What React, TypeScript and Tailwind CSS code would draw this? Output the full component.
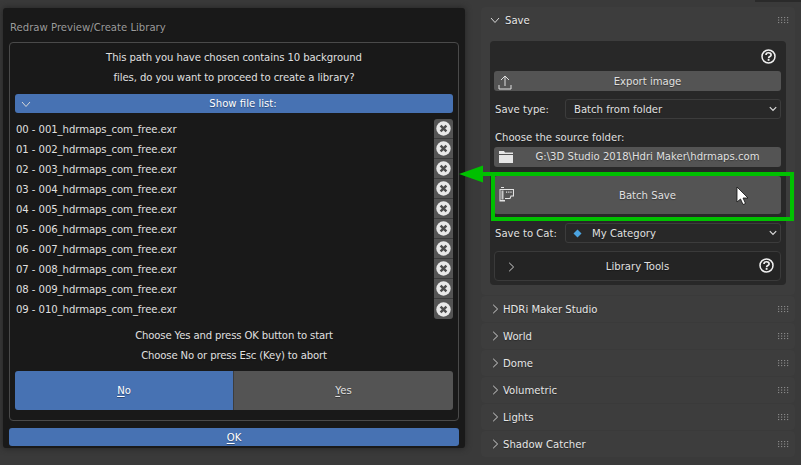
import React from "react";

const files = [
  "00 - 001_hdrmaps_com_free.exr",
  "01 - 002_hdrmaps_com_free.exr",
  "02 - 003_hdrmaps_com_free.exr",
  "03 - 004_hdrmaps_com_free.exr",
  "04 - 005_hdrmaps_com_free.exr",
  "05 - 006_hdrmaps_com_free.exr",
  "06 - 007_hdrmaps_com_free.exr",
  "07 - 008_hdrmaps_com_free.exr",
  "08 - 009_hdrmaps_com_free.exr",
  "09 - 010_hdrmaps_com_free.exr",
];
const panels = ["HDRi Maker Studio", "World", "Dome", "Volumetric", "Lights", "Shadow Catcher"];

function Chevron({ dir, className }: { dir: "down" | "right" | "small"; className?: string }) {
  if (dir === "down")
    return (
      <svg width="10" height="7" viewBox="0 0 10 7" className={className}>
        <path d="M1 1 L5 5.5 L9 1" fill="none" stroke="#d8d8d8" strokeWidth="1" />
      </svg>
    );
  if (dir === "small")
    return (
      <svg width="8" height="6" viewBox="0 0 8 6" className={className}>
        <path d="M0.8 1.2 L4 4.4 L7.2 1.2" fill="none" stroke="#dcdcdc" strokeWidth="1.2" />
      </svg>
    );
  return (
    <svg width="7" height="10" viewBox="0 0 7 10" className={className}>
      <path d="M1.2 0.8 L5.6 5 L1.2 9.2" fill="none" stroke="#cfcfcf" strokeWidth="1" />
    </svg>
  );
}

function Grip() {
  const dots = [];
  for (let x = 0; x < 4; x++)
    for (let y = 0; y < 3; y++)
      dots.push(<rect key={`${x}-${y}`} x={x * 3} y={y * 2.5} width="1.2" height="1.1" fill="#8a8a8a" />);
  return (
    <svg width="11" height="7" viewBox="0 0 11 7" className="shrink-0">
      {dots}
    </svg>
  );
}

function Help() {
  return (
    <svg width="15" height="15" viewBox="0 0 15 15">
      <circle cx="7.5" cy="7.5" r="6.5" fill="none" stroke="#f0f0f0" strokeWidth="1.5" />
      <path d="M5 6 C5 3 10.1 3 10.1 5.9 C10.1 7.6 7.6 7.5 7.6 9.2" fill="none" stroke="#f0f0f0" strokeWidth="1.7" />
      <rect x="6.7" y="10" width="1.8" height="1.8" fill="#f0f0f0" />
    </svg>
  );
}

function CloseBadge() {
  return (
    <svg width="15" height="15" viewBox="0 0 15 15">
      <circle cx="7.5" cy="7.5" r="7.2" fill="#e8e8e8" />
      <path d="M4.6 4.6 L10.4 10.4 M10.4 4.6 L4.6 10.4" stroke="#4e4e4e" strokeWidth="2.4" />
    </svg>
  );
}

function Underlined({ first, rest }: { first: string; rest: string }) {
  return (
    <span>
      <span className="underline decoration-1 underline-offset-2">{first}</span>
      {rest}
    </span>
  );
}

export default function App() {
  return (
    <div
      className="relative flex h-[465px] w-[801px] items-start overflow-hidden bg-[#3a3a3a] text-[10.1px] text-[#e0e0e0] [text-shadow:0_1px_1px_rgba(0,0,0,0.35)]"
      style={{ fontFamily: '"DejaVu Sans", sans-serif' }}
    >
      <div className="absolute right-0 top-0 h-[2px] w-[46px] bg-[#2a2a2a]" />
      {/* Dialog */}
      <div className="ml-[3px] mt-2 flex h-[440px] w-[462px] flex-col rounded-[3px] bg-[#191919] px-[6px] shadow-[0_0_6px_#222222]">
        <div className="flex h-[34px] shrink-0 items-center pt-[5px] pl-px text-[#9b9b9b]">Redraw Preview/Create Library</div>
        <div className="flex h-[379px] flex-col rounded-[4px] border border-[#4a4a4a] px-[5px] pt-[4px]">
          <div className="flex h-5 items-center justify-center pt-px tracking-[-0.1px]">This path you have chosen contains 10 background</div>
          <div className="flex h-5 items-center justify-center pt-px tracking-[-0.1px]">files, do you want to proceed to create a library?</div>
          <div className="relative mt-[7px] flex h-[19px] shrink-0 items-center justify-center rounded-[3px] bg-[#4772b3] pl-[18px] pt-px text-white">
            <Chevron dir="down" className="absolute left-[6px]" />
            Show file list:
          </div>
          <div className="mt-[6px] flex flex-col">
            {files.map((f, i) => (
              <div key={f} className="flex h-5 items-center justify-between">
                <span className="pt-px pl-px tracking-[-0.07px]">{f}</span>
                <div
                  className={`flex h-5 w-[19px] items-center justify-center border-b border-[#3c3c3c] bg-[#545454] ${
                    i === 0 ? "rounded-t-[3px]" : ""
                  } ${i === 9 ? "rounded-b-[3px] border-b-0" : ""}`}
                >
                  <CloseBadge />
                </div>
              </div>
            ))}
          </div>
          <div className="mt-[6px] flex h-5 items-center justify-center pt-px tracking-[-0.15px]">Choose Yes and press OK button to start</div>
          <div className="flex h-5 items-center justify-center pt-px tracking-[-0.15px]">Choose No or press Esc (Key) to abort</div>
          <div className="mt-[6px] flex h-[39px] shrink-0">
            <div className="flex w-[218px] items-center justify-center rounded-l-[3px] bg-[#4772b3] pt-px text-white">
              <Underlined first="N" rest="o" />
            </div>
            <div className="flex flex-1 items-center justify-center rounded-r-[3px] border-l border-[#3d3d3d] bg-[#545454] pt-px">
              <Underlined first="Y" rest="es" />
            </div>
          </div>
        </div>
        <div className="mt-[7px] flex h-[18px] shrink-0 items-center justify-center rounded-[3px] bg-[#4772b3] pt-px text-white">
          <Underlined first="O" rest="K" />
        </div>
      </div>

      {/* Right column */}
      <div className="ml-4 mt-[7px] flex w-[314px] flex-col gap-px">
        <div className="h-[288px] rounded-[4px] bg-[#3d3d3d] px-[9px]">
          <div className="-mx-[9px] flex h-[26px] items-center pl-[9px] pr-[6px]">
            <Chevron dir="down" />
            <span className="ml-[5px] flex-1 pt-px text-[#e6e6e6]">Save</span>
            <Grip />
          </div>
          <div className="mt-2 h-[244px] rounded-[4px] bg-[#282828] px-1">
            <div className="flex h-[30px] items-center justify-end pr-[6px] pt-[1px]">
              <Help />
            </div>
            <div className="relative flex h-5 w-[287px] items-center justify-center rounded-[3px] bg-[#545454] pl-5 pt-px">
              <svg width="14" height="16" viewBox="0 0 14 16" className="absolute left-[4px]">
                <path d="M7 12 V2 M3 6 L7 2 L11 6 M1 11 V15 H13 V11" fill="none" stroke="#e0e0e0" strokeWidth="1" />
              </svg>
              Export image
            </div>
            <div className="mt-2 flex h-5 w-[287px] items-center">
              <span className="w-[71px] pl-px pt-px">Save type:</span>
              <div className="flex h-5 flex-1 items-center justify-between rounded-[3px] border border-[#3c3c3c] bg-[#282828] pl-2 pr-[3px]">
                <span className="pt-px">Batch from folder</span>
                <Chevron dir="small" />
              </div>
            </div>
            <div className="mt-2 flex h-5 items-center pl-px pt-px">Choose the source folder:</div>
            <div className="relative flex h-5 w-[287px] items-center justify-center rounded-[3px] bg-[#545454] pl-5">
              <svg width="14" height="12" viewBox="0 0 14 12" className="absolute left-[5px]">
                <path d="M0 0 H5 L6 1.5 H14 V3 H0 Z M0 4 H14 V12 H0 Z" fill="#e6e6e6" />
              </svg>
              G:\3D Studio 2018\Hdri Maker\hdrmaps.com
            </div>
            <div className="relative mt-[9px] flex h-[38px] w-[287px] items-center justify-center rounded-[3px] bg-[#545454] pl-5 pt-px">
              <svg width="15" height="15" viewBox="0 0 15 15" className="absolute left-[5px] top-[11px]">
                <path d="M2 0 H5 V1 H2 Z M0.5 2 H6 V3 H1.5 V13 H6 V14.5 H0.5 Z" fill="#e4e4e4" />
                <path d="M2.5 3.5 H4.5 V12.5 H2.5 Z" fill="#c8c8c8" />
                <path d="M6 2.5 H14.5 V9 H12 L11 11.5 H6" fill="none" stroke="#e4e4e4" strokeWidth="1.1" />
                <path d="M7 4.5 H8.2 V5.7 H7 Z M9.2 4.5 H10.4 V5.7 H9.2 Z M11.4 4.5 H12.6 V5.7 H11.4 Z" fill="#e4e4e4" />
              </svg>
              Batch Save
            </div>
            <div className="mt-[9px] flex h-5 w-[287px] items-center">
              <span className="w-[71px] pl-px pt-px">Save to Cat:</span>
              <div className="flex h-5 flex-1 items-center rounded-[3px] border border-[#3c3c3c] bg-[#282828] pl-[7px] pr-[3px]">
                <svg width="9" height="9" viewBox="0 0 9 9" className="mr-[10px]">
                  <path d="M4.5 0.5 L8.5 4.5 L4.5 8.5 L0.5 4.5 Z" fill="#4ba3e0" />
                </svg>
                <span className="flex-1 pt-px">My Category</span>
                <Chevron dir="small" />
              </div>
            </div>
            <div className="relative mt-[8px] flex h-[30px] w-[287px] items-center justify-center rounded-[4px] border border-[#3a3a3a] bg-[#242424] pt-px">
              <Chevron dir="right" className="absolute left-[13px]" />
              Library Tools
              <div className="absolute right-[6px] top-[6px]">
                <Help />
              </div>
            </div>
          </div>
        </div>
        {panels.map((p) => (
          <div key={p} className="flex h-[26px] items-center rounded-[4px] bg-[#3d3d3d] pl-[11px] pr-[6px]">
            <Chevron dir="right" />
            <span className="ml-[4px] flex-1 pt-px text-[#e6e6e6]">{p}</span>
            <Grip />
          </div>
        ))}
      </div>

      {/* Annotation overlay */}
      <div className="pointer-events-none absolute left-[491px] top-[172px] h-[49px] w-[303px] border-4 border-[#00c000]" />
      <svg className="pointer-events-none absolute left-[458px] top-[164px]" width="36" height="20" viewBox="0 0 36 20">
        <path d="M1 10 L25 1.5 V8 H35 V12 H25 V18.5 Z" fill="#00c000" />
      </svg>
      <svg className="pointer-events-none absolute left-[736px] top-[186px]" width="14" height="20" viewBox="0 0 14 20">
        <path d="M1 1 V16 L4.5 13 L7 18.5 L9.5 17.5 L7 12 H12 Z" fill="#ffffff" stroke="#111111" strokeWidth="0.8" />
      </svg>
    </div>
  );
}
